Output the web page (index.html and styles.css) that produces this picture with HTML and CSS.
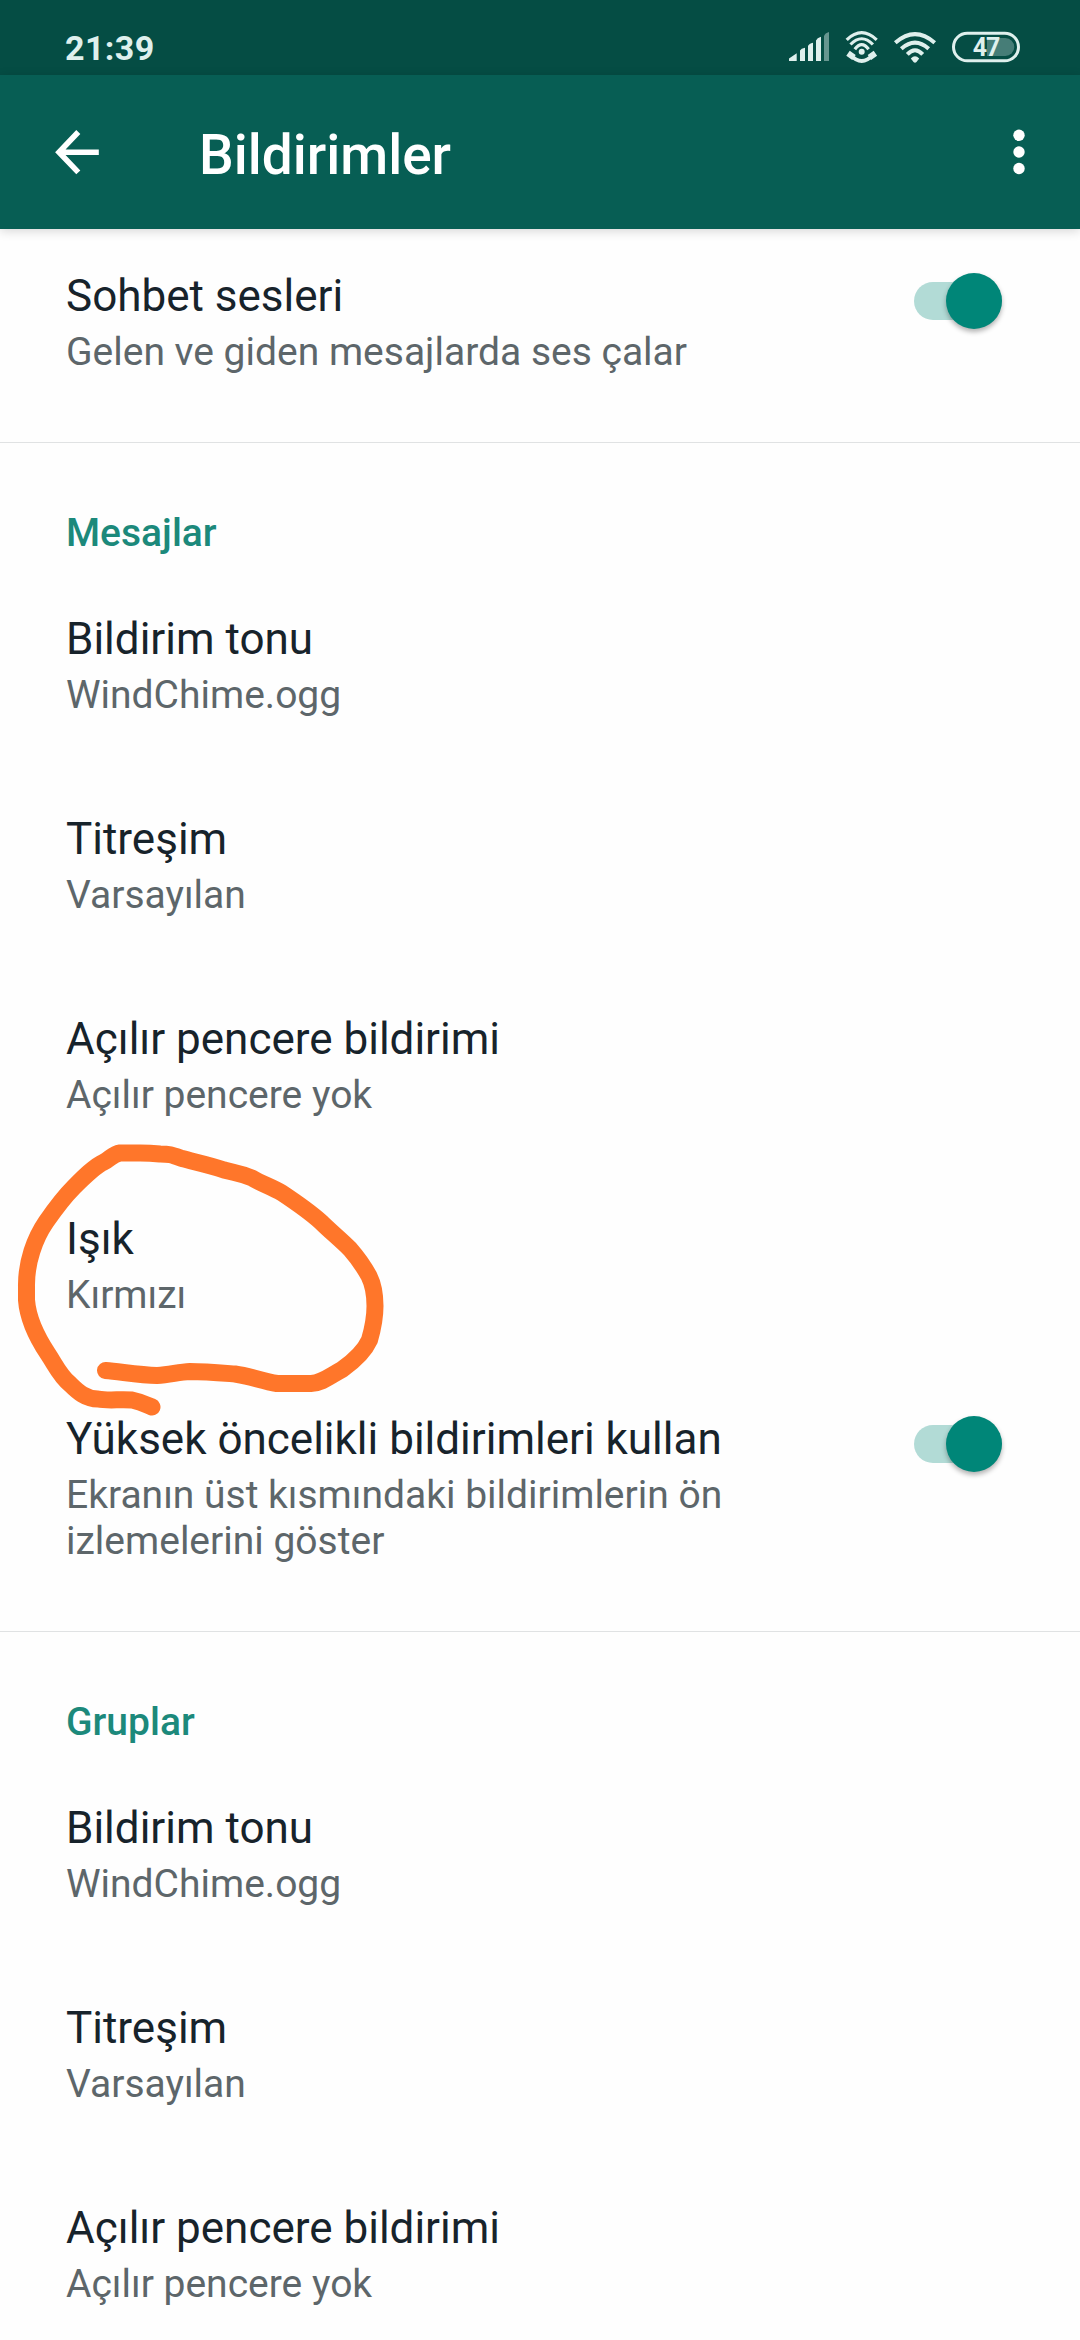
FILE: index.html
```html
<!DOCTYPE html>
<html lang="tr">
<head>
<meta charset="utf-8">
<title>Bildirimler</title>
<link rel="stylesheet" href="styles.css">
</head>
<body>
<div class="screen">
  <div class="status-bar">
    <span class="clock">21:39</span>
    <svg class="status-icons" viewBox="0 0 240 40" width="240" height="40">
      <g fill="#dff0ed">
        <path d="M1 32V29.500L8.700 24.300V32ZM12 32V21.500Q13 19.500 17 18.700V32ZM20 32V17Q21 14.500 25 13.700V32ZM28 32V11.500Q29 9 33 7.700V32Z"/>
        <path d="M36 32V7Q37 4 41 3V32Z" opacity=".45"/>
      </g>
      <g fill="none" stroke="#dff0ed" stroke-width="3.200">
        <path d="M58.700 10.800Q73.700-3.500 88.700 10.800M62.500 15.500Q73.700 4 84.900 15.500M66.800 20.300Q73.700 11 80.600 20.300"/>
        <path d="M62.500 26Q73.700 38 84.900 26" stroke-width="4"/>
        <path d="M60 24.300L66 28.500M87.400 24.300L81.400 28.500" stroke-width="6"/>
      </g>
      <circle cx="73.700" cy="22.700" r="3" fill="#dff0ed"/>
      <g fill="none" stroke="#dff0ed" stroke-width="4">
        <path d="M107.300 13.800Q127-3.500 146.700 13.800M113.300 19.800Q127 7.500 140.700 19.800M119.300 25.300Q127 17 134.700 25.300"/>
      </g>
      <path d="M122.800 29.500Q127 25 131.200 29.500L128.500 33Q127 34.300 125.500 33Z" fill="#dff0ed"/>
      <path d="M199 9H217.300A9 9 0 0 1 217.300 27H199Z" fill="#dff0ed" opacity=".3"/>
      <rect x="165.500" y="4.200" width="65" height="27.600" rx="13.800" fill="none" stroke="#dff0ed" stroke-width="3"/>
      <text x="198" y="27" class="battery-level">47</text>
    </svg>
  </div>
  <header class="app-bar">
    <svg class="back" viewBox="0 0 46 46" width="46" height="46"><path d="M44.800 23.200H6M24.300 3L5 23.200L24.300 43.400" fill="none" stroke="#fff" stroke-width="5.600"/></svg>
    <h1 class="title">Bildirimler</h1>
    <svg class="more" viewBox="0 0 12 46" width="12" height="46" fill="#fff"><circle cx="6" cy="6.300" r="5.700"/><circle cx="6" cy="23" r="5.700"/><circle cx="6" cy="39.500" r="5.700"/></svg>
  </header>
  <main class="settings">
    <section class="group group-first">
      <div class="row">
        <div class="text"><div class="name">Sohbet sesleri</div><div class="value">Gelen ve giden mesajlarda ses çalar</div></div>
        <div class="switch"><div class="thumb"></div></div>
      </div>
    </section>
    <section class="group">
      <h2 class="heading">Mesajlar</h2>
      <div class="row"><div class="text"><div class="name">Bildirim tonu</div><div class="value">WindChime.ogg</div></div></div>
      <div class="row"><div class="text"><div class="name">Titreşim</div><div class="value">Varsayılan</div></div></div>
      <div class="row"><div class="text"><div class="name">Açılır pencere bildirimi</div><div class="value">Açılır pencere yok</div></div></div>
      <div class="row"><div class="text"><div class="name">Işık</div><div class="value">Kırmızı</div></div></div>
      <div class="row">
        <div class="text"><div class="name">Yüksek öncelikli bildirimleri kullan</div><div class="value">Ekranın üst kısmındaki bildirimlerin ön<br>izlemelerini göster</div></div>
        <div class="switch"><div class="thumb"></div></div>
      </div>
    </section>
    <section class="group">
      <h2 class="heading">Gruplar</h2>
      <div class="row"><div class="text"><div class="name">Bildirim tonu</div><div class="value">WindChime.ogg</div></div></div>
      <div class="row"><div class="text"><div class="name">Titreşim</div><div class="value">Varsayılan</div></div></div>
      <div class="row"><div class="text"><div class="name">Açılır pencere bildirimi</div><div class="value">Açılır pencere yok</div></div></div>
    </section>
  </main>
  <svg class="marker" viewBox="0 0 400 300" width="400" height="300">
    <path d="M105.500 240.500C122 242 140 245 157 245.500C170 245 178 242 190 241.500C205 241.500 222 243 235 244C250 246 262 251 277 253.500H311C322 253 330 246 342 239.500C354 231 365 220 369.500 210C373 198 375 190 375 176C375 164 373 154 369 146C363 135 357 127 350 119C340 109 330 101 321 92C310 82 297 73 282 63C272 57 262 54 252 48C240 43 235 43 224 40C210 35 195 32 182 28.500C172 25 170 24 160 24C150 23 148 23 140 23H120C113 24 110 29 104 32C95 36 84 47 74 57C62 69 55 79 46 92C35 108 26 132 26.500 157V170C28 190 38 209 48 224C56 236 60 246 70 254C78 262 86 269 98 269C108 271 120 269 132 270C142 272 147 275 152 277"/>
  </svg>
</div>
</body>
</html>
```
FILE: styles.css
```css
* { box-sizing: border-box; }
body { margin: 0; background: #fefefe; font-family: Roboto, sans-serif; }
.screen {
  position: relative;
  width: 1080px;
  height: 2340px;
  overflow: hidden;
  background: #fefefe;
}
.status-bar {
  display: flex;
  justify-content: space-between;
  height: 75px;
  padding: 29px 52px 0 65px;
  background: #054d44;
  color: #dff0ed;
}
.clock { margin-top: -1px; font-size: 34px; line-height: 40px; font-weight: 700; letter-spacing: .4px; }
.status-icons { display: block; }
.battery-level { font-size: 25px; font-weight: 700; letter-spacing: -1px; fill: #dff0ed; text-anchor: middle; }
.app-bar {
  position: relative;
  display: flex;
  align-items: center;
  height: 154px;
  padding: 0 55px 0 54px;
  background: #075e54;
  box-shadow: 0 2px 10px rgba(0, 0, 0, .16);
}
.title {
  flex: 1;
  margin: 6px 0 0 99px;
  color: #fff;
  font-size: 55px;
  line-height: 64px;
  font-weight: 500;
}
.group { border-bottom: 1px solid #e0e2e3; padding-bottom: 20px; }
.group:last-child { border-bottom: 0; }
.group-first { height: 214px; }
.heading {
  margin: 0;
  padding: 67px 66px 9px;
  color: #1c897b;
  font-size: 39px;
  line-height: 46px;
  font-weight: 500;
}
.row { display: flex; justify-content: space-between; padding: 48px 78px 47px 66px; }
.group-first .row { padding-top: 41px; }
.name { color: #17232b; font-size: 44px; line-height: 52px; }
.value { margin-top: 7px; color: #5d666a; font-size: 39px; line-height: 46px; }
.switch {
  width: 88px;
  height: 38px;
  margin-top: 12px;
  border-radius: 19px;
  background: #b2dbd6;
}
.thumb {
  width: 56px;
  height: 56px;
  margin: -9px 0 0 32px;
  border-radius: 50%;
  background: #008678;
  box-shadow: 0 3px 5px rgba(0, 0, 0, .3);
}
.marker {
  position: absolute;
  left: 0;
  top: 1130px;
  fill: none;
  stroke: #ff762a;
  stroke-width: 17px;
  stroke-linecap: round;
  stroke-linejoin: round;
}
```
